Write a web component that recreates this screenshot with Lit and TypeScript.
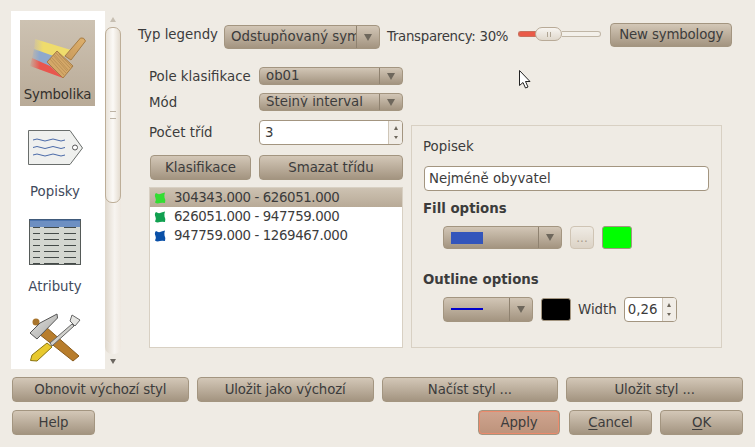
import { LitElement, html, css, svg } from "lit";
import { customElement } from "lit/decorators.js";

const brushIcon = svg`
  <defs>
    <linearGradient id="hd" x1="0" y1="1" x2="1" y2="0"><stop offset="0" stop-color="#c89a5c"/><stop offset="1" stop-color="#deb06c"/></linearGradient>
    <linearGradient id="fy" x1="0" x2="1"><stop offset="0" stop-color="#efdc6c" stop-opacity="0.2"/><stop offset="0.25" stop-color="#efdc6c"/></linearGradient>
    <linearGradient id="fb" x1="0" x2="1"><stop offset="0" stop-color="#8fa8cc" stop-opacity="0.2"/><stop offset="0.25" stop-color="#8fa8cc"/></linearGradient>
    <linearGradient id="fr" x1="0" x2="1"><stop offset="0" stop-color="#e8564e" stop-opacity="0.1"/><stop offset="0.3" stop-color="#e8564e"/></linearGradient>
  </defs>
  <path d="M15 19 L51 30 L40 40 L14 30Z" fill="url(#fy)"/>
  <path d="M14 29 L42 39 L30 48 L12 38Z" fill="url(#fb)"/>
  <path d="M12 38 L30 46 L43 58 L10 46Z" fill="url(#fr)"/>
  <path d="M60.5 18 Q64 17 65.5 21 L51 40 L45 36Z" fill="url(#hd)" stroke="#a67c45" stroke-width="1"/>
  <path d="M37 31 L53 46 L43 58 L27 42Z" fill="#d4a868" stroke="#a67c45" stroke-width="1"/>
  <path d="M33 35 L47 51 M30 39 L44 55 M36 33 L50 48 M31 37 L46 53 M34 34 L48 50 M39 34 L52 47" stroke="#b18850" stroke-width="0.7" fill="none"/>
`;

const tagIcon = svg`
  <path d="M8.5 15.5 H50 L62.5 33 L50 49.5 H8.5Z" fill="#eff0ee" stroke="#6a6e6c" stroke-width="1"/>
  <circle cx="55" cy="32.5" r="2.5" fill="#fff" stroke="#555" stroke-width="1"/>
  <path d="M13 25 q4 -2 8 0 t8 0 t8 0 t8 0 M13 32.5 q4 -2 8 0 t8 0 t8 0 t8 0 M13 40 q4 -2 8 0 t8 0 t8 0 t8 0" fill="none" stroke="#4a6aa8" stroke-width="1"/>
`;

const tableRows = [16, 22, 28, 34, 40, 46, 52];
const tableIcon = svg`
  <rect x="9.5" y="9.5" width="51" height="45" fill="#d3d6d0" stroke="#555a58" stroke-width="1"/>
  <rect x="10" y="10" width="50" height="7" fill="#6d8fc2"/>
  <path d="M9.5 10 H60.5" stroke="#2d5a9c" stroke-width="1"/>
  ${tableRows.map(
    (y) => svg`<path d="M13 ${y + 1.5} H20 M24 ${y + 1.5} H39 M44 ${y + 1.5} H56" stroke="#444a48" stroke-width="1"/>`
  )}
`;

const toolsIcon = svg`
  <defs><linearGradient id="hm" x1="0" y1="0" x2="1" y2="1"><stop offset="0" stop-color="#e2e2e0"/><stop offset="1" stop-color="#a8a8a6"/></linearGradient></defs>
  <circle cx="16" cy="17" r="3.5" fill="#a8742c"/>
  <path d="M26 22 L59 51 L53 56 L19 29Z" fill="#b87d2c" stroke="#8a5c1c" stroke-width="1"/>
  <path d="M10 28 L20 18 L37 9 L37.5 13 L17 34Z" fill="url(#hm)" stroke="#555" stroke-width="1"/>
  <path d="M30 38 L52 19 L54 21 L32 41Z" fill="#d0d0cc" stroke="#666" stroke-width="1"/>
  <path d="M52 10 L60 15 L55 21 L50 16Z" fill="#e5e5e2" stroke="#666" stroke-width="1"/>
  <path d="M27 38 L32 42 L17 56 L10.5 55.5 L12 50Z" fill="#e8c92e" stroke="#8a7410" stroke-width="1"/>
`;

const blob = (color: string) => html`<svg class="swatch" viewBox="0 0 12 12"><path d="M2 1 Q4 2.5 6 2 Q8 1 11 0.5 Q10 3 10.5 5.5 Q12 8 11 11 Q8 10.5 6 11 Q3 12 1 10.5 Q2.5 8 1.5 6 Q0 3 2 1Z" fill=${color}></path></svg>`;

@customElement("app-root")
export class AppRoot extends LitElement {
  static styles = css`
    :host {
      display: block;
      position: relative;
      width: 755px;
      height: 447px;
      overflow: hidden;
      background: #efebe4;
      color: #3c3c3c;
      font-family: "DejaVu Sans", sans-serif;
      font-size: 13.33px;
    }
    .page {
      display: flex;
      flex-direction: column;
      padding: 11px 12px 0 11px;
    }
    .upper {
      display: flex;
      height: 358px;
    }
    .sidebar {
      width: 94px;
      height: 358px;
      flex: none;
      overflow: hidden;
      background: #fff;
      box-sizing: border-box;
      padding: 9px 0 0 9px;
      display: flex;
      flex-direction: column;
      gap: 9px;
    }
    .item {
      width: 75px;
      height: 86px;
      flex: none;
      text-align: center;
      color: #3f4a5c;
    }
    .item svg {
      display: block;
      width: 75px;
      height: 64px;
    }
    .item span {
      display: block;
      line-height: 22px;
      white-space: nowrap;
      margin-top: 2px;
      padding-right: 5px;
    }
    .item.selected {
      background: linear-gradient(#cdc2b2, #c1b4a2 60%, #b8aa97);
      color: #33302c;
    }
    .item.selected span {
      margin-top: 0;
      padding-right: 0;
      letter-spacing: -0.15px;
    }
    .scroll {
      width: 16px;
      flex: none;
      display: flex;
      flex-direction: column;
      align-items: center;
    }
    .scroll .up,
    .scroll .down {
      width: 0;
      height: 0;
      border-left: 3px solid transparent;
      border-right: 3px solid transparent;
      flex: none;
    }
    .scroll .up {
      margin-top: 6px;
      border-bottom: 5px solid #c7bfb2;
    }
    .scroll .down {
      margin-top: 5px;
      border-top: 5px solid #6b6660;
    }
    .trough {
      margin-top: 5px;
      width: 16px;
      height: 327px;
      box-sizing: border-box;
      background: linear-gradient(90deg, #e0d8cc, #f7f4f0 60%, #eee8e0);
      border-radius: 7px;
    }
    .thumb {
      height: 176px;
      box-sizing: border-box;
      border: 1px solid #bdae98;
      border-radius: 7px;
      background: linear-gradient(90deg, #e9e3da, #fbf9f6 50%, #e4dcd0);
      display: flex;
      align-items: center;
      justify-content: center;
    }
    .thumb i {
      display: block;
      width: 6px;
      height: 6px;
      border-top: 1px solid #bdb3a5;
      border-bottom: 1px solid #bdb3a5;
    }
    .content {
      margin-left: 16px;
      flex: 1;
      display: flex;
      flex-direction: column;
    }
    .top-row {
      display: flex;
      align-items: center;
      height: 26px;
      margin-top: 12px;
      white-space: nowrap;
    }
    .top-row .legend {
      margin: 0 6px 4px 1px;
    }
    .top-row .legend-combo {
      width: 156px;
      height: 24px;
      margin-top: 2px;
    }
    .top-row .transparency {
      margin-left: 7px;
      letter-spacing: -0.3px;
    }
    .top-row .new {
      width: 122px;
      height: 24px;
      line-height: 22px;
      align-self: flex-start;
      letter-spacing: -0.15px;
    }
    .body {
      display: flex;
      margin-top: 18px;
      gap: 8px;
      align-items: flex-end;
    }
    .left {
      width: 254px;
      margin-left: 12px;
      flex: none;
    }
    .form {
      display: grid;
      grid-template-columns: 110px 144px;
      row-gap: 8px;
      align-items: center;
    }
    .combo {
      display: flex;
      box-sizing: border-box;
      align-items: stretch;
      border: 1px solid #a39580;
      border-radius: 4px;
      background: linear-gradient(#d2c6b6, #a39480);
      overflow: hidden;
      height: 24px;
    }
    .combo .value {
      flex: 1;
      min-width: 0;
      padding-left: 6px;
      overflow: hidden;
      white-space: nowrap;
      line-height: 22px;
    }
    .combo .arrow {
      width: 22px;
      flex: none;
      border-left: 1px solid #8f8270;
      display: flex;
      align-items: center;
      justify-content: center;
    }
    .combo .arrow::after {
      content: "";
      border-left: 4px solid transparent;
      border-right: 4px solid transparent;
      border-top: 7px solid #6e675c;
    }
    .combo.thin {
      height: 18px;
    }
    /* the reference squeezes the text: only a slice of each line shows */
    .combo.thin .value {
      height: 11px;
      line-height: 12px;
      margin-top: 2px;
    }
    .spin {
      display: flex;
      box-sizing: border-box;
      height: 25px;
      border: 1px solid #a39580;
      border-radius: 4px;
      background: #fff;
      overflow: hidden;
    }
    .form .spin {
      margin-top: 1px;
    }
    .spin .num {
      flex: 1;
      padding-left: 5px;
      line-height: 23px;
    }
    .spin .num.small {
      padding-left: 3px;
    }
    .spin.width-spin {
      width: 53px;
      margin-left: 7px;
    }
    .spin .btns {
      width: 14px;
      flex: none;
      border-left: 1px solid #cfc6b8;
      background: #f1ede7;
      display: flex;
      flex-direction: column;
      align-items: center;
      justify-content: space-between;
      padding: 5px 0;
      box-sizing: border-box;
    }
    .spin .btns b {
      width: 0;
      height: 0;
      border-left: 2.5px solid transparent;
      border-right: 2.5px solid transparent;
    }
    .spin .btns .u {
      border-bottom: 4px solid #6e675c;
    }
    .spin .btns .d {
      border-top: 3px solid #6e675c;
    }
    .btn {
      box-sizing: border-box;
      height: 25px;
      line-height: 23px;
      text-align: center;
      white-space: nowrap;
      border: 1px solid #a39580;
      border-radius: 4px;
      background: linear-gradient(#d3c7b7, #a39480);
    }
    .btn u {
      text-underline-offset: 2px;
    }
    .actions {
      display: grid;
      grid-template-columns: 101px 144px;
      column-gap: 8px;
      margin: 10px 0 7px 1px;
    }
    .list {
      box-sizing: border-box;
      height: 161px;
      border: 1px solid #d8d0c3;
      background: #fff;
    }
    .row {
      display: flex;
      align-items: center;
      height: 19px;
      padding-left: 4px;
      gap: 8px;
      white-space: nowrap;
      letter-spacing: -0.39px;
    }
    .row.selected {
      background: linear-gradient(#cdc2b2, #b8aa97);
    }
    .swatch {
      width: 12px;
      height: 12px;
      flex: none;
    }
    .panel {
      width: 311px;
      height: 223px;
      flex: none;
      box-sizing: border-box;
      border: 1px solid #d8d0c3;
      padding: 12px 12px 0 11px;
    }
    .panel .title {
      line-height: 17px;
    }
    .text-input {
      box-sizing: border-box;
      height: 25px;
      margin: 11px 0 0 1px;
      width: 285px;
      border: 1px solid #a39580;
      border-radius: 4px;
      background: #fff;
      line-height: 23px;
      padding-left: 4px;
    }
    .heading {
      font-weight: bold;
      line-height: 17px;
    }
    .fill-heading {
      margin-top: 9px;
    }
    .outline-heading {
      margin-top: 22px;
    }
    .opts {
      display: flex;
      align-items: center;
      margin: 9px 0 0 20px;
    }
    .fill-combo {
      width: 119px;
      height: 23px;
    }
    .line-combo {
      width: 90px;
      height: 25px;
    }
    .preview-fill {
      width: 32px;
      height: 12px;
      background: #3355bb;
      margin: 5px 0 0 1px;
    }
    .preview-line {
      width: 32px;
      height: 2px;
      background: #0000cc;
      margin: 10px 0 0 1px;
    }
    .dots {
      box-sizing: border-box;
      width: 24px;
      height: 23px;
      margin-left: 8px;
      border: 1px solid #cfc4b4;
      border-radius: 4px;
      background: linear-gradient(#efebe4, #dcd3c6);
      color: #a89c8c;
      text-align: center;
      line-height: 22px;
      font-size: 12px;
    }
    .color {
      box-sizing: border-box;
      width: 30px;
      height: 23px;
      margin-left: 8px;
      border: 1px solid #a39580;
      border-radius: 3px;
    }
    .width-label {
      margin-left: 7px;
    }
    .bottom {
      display: grid;
      grid-template-columns: repeat(4, 1fr);
      column-gap: 8px;
      margin: 8px 0 0 1px;
      width: 731px;
    }
    .bottom .btn {
      letter-spacing: -0.15px;
    }
    .bottom.dialog {
      display: flex;
      gap: 8px;
    }
    .bottom.dialog .btn {
      width: 83px;
    }
    .bottom.dialog .spacer {
      flex: 1;
    }
    .bottom.dialog .btn.apply {
      width: 82px;
      margin-right: 1px;
      background: linear-gradient(#cfa48f, #bd937b);
      box-shadow: inset 0 0 0 1px #ec8a6c;
    }
    .slider {
      display: flex;
      align-items: center;
      width: 83px;
      margin: 0 9px 4px 10px;
    }
    .slider .done {
      width: 18px;
      height: 4px;
      border: 1px solid #c9705c;
      border-right: none;
      border-radius: 3px 0 0 3px;
      background: #ea5a48;
      flex: none;
    }
    .slider .knob {
      width: 27px;
      height: 14px;
      margin-left: -2px;
      flex: none;
      box-sizing: border-box;
      border: 1px solid #b8aa97;
      border-radius: 7px;
      background: linear-gradient(#f7f4f0, #e0d8cc);
      display: flex;
      align-items: center;
      justify-content: center;
    }
    .slider .knob i {
      display: block;
      width: 2px;
      height: 5px;
      border-left: 1px solid #b0a594;
      border-right: 1px solid #b0a594;
    }
    .slider .rest {
      flex: 1;
      height: 4px;
      border: 1px solid #c0b6a6;
      border-left: none;
      border-radius: 0 3px 3px 0;
      background: #f3f0ea;
    }
    .cursor {
      position: absolute;
      left: 519px;
      top: 70px;
      width: 12px;
      height: 20px;
    }
  `;

  render() {
    return html`
      <div class="page">
        <div class="upper">
          <div class="sidebar">
            <div class="item selected"><svg viewBox="0 0 75 64">${brushIcon}</svg><span>Symbolika</span></div>
            <div class="item"><svg viewBox="0 0 75 64">${tagIcon}</svg><span>Popisky</span></div>
            <div class="item"><svg viewBox="0 0 75 64">${tableIcon}</svg><span>Atributy</span></div>
            <div class="item"><svg viewBox="0 0 75 64">${toolsIcon}</svg></div>
          </div>
          <div class="scroll">
            <div class="up"></div>
            <div class="trough"><div class="thumb"><i></i></div></div>
            <div class="down"></div>
          </div>
          <div class="content">
            <div class="top-row">
              <span class="legend">Typ legendy</span>
              <div class="combo legend-combo"><div class="value">Odstupňovaný sym</div><div class="arrow"></div></div>
              <span class="transparency">Transparency: 30%</span>
              <div class="slider"><div class="done"></div><div class="knob"><i></i></div><div class="rest"></div></div>
              <div class="btn new">New symbology</div>
            </div>
            <div class="body">
              <div class="left">
                <div class="form">
                  <span>Pole klasifikace</span>
                  <div class="combo thin"><div class="value">ob01</div><div class="arrow"></div></div>
                  <span>Mód</span>
                  <div class="combo thin"><div class="value">Stejný interval</div><div class="arrow"></div></div>
                  <span>Počet tříd</span>
                  <div class="spin"><div class="num">3</div><div class="btns"><b class="u"></b><b class="d"></b></div></div>
                </div>
                <div class="actions">
                  <div class="btn">Klasifikace</div>
                  <div class="btn">Smazat třídu</div>
                </div>
                <div class="list">
                  <div class="row selected">${blob("#33dd33")}304343.000 - 626051.000</div>
                  <div class="row">${blob("#11a050")}626051.000 - 947759.000</div>
                  <div class="row">${blob("#0a50a8")}947759.000 - 1269467.000</div>
                </div>
              </div>
              <div class="panel">
                <div class="title">Popisek</div>
                <div class="text-input">Nejméně obyvatel</div>
                <div class="heading fill-heading">Fill options</div>
                <div class="opts">
                  <div class="combo fill-combo"><div class="value"><div class="preview-fill"></div></div><div class="arrow"></div></div>
                  <div class="dots">...</div>
                  <div class="color" style="background:#00ff00"></div>
                </div>
                <div class="heading outline-heading">Outline options</div>
                <div class="opts">
                  <div class="combo line-combo"><div class="value"><div class="preview-line"></div></div><div class="arrow"></div></div>
                  <div class="color" style="background:#000"></div>
                  <span class="width-label">Width</span>
                  <div class="spin width-spin"><div class="num small">0,26</div><div class="btns"><b class="u"></b><b class="d"></b></div></div>
                </div>
              </div>
            </div>
          </div>
        </div>
        <div class="bottom">
          <div class="btn">Obnovit výchozí styl</div>
          <div class="btn">Uložit jako výchozí</div>
          <div class="btn">Načíst styl ...</div>
          <div class="btn">Uložit styl ...</div>
        </div>
        <div class="bottom dialog">
          <div class="btn">Help</div>
          <div class="spacer"></div>
          <div class="btn apply">Apply</div>
          <div class="btn"><u>C</u>ancel</div>
          <div class="btn"><u>O</u>K</div>
        </div>
      </div>
      <svg class="cursor" viewBox="0 0 12 20"><path d="M0.5 0.5 V15.5 L4 12.5 L6.5 18 L9 17 L6.5 11.5 H11Z" fill="#fff" stroke="#222" stroke-width="1"></path></svg>
    `;
  }
}
